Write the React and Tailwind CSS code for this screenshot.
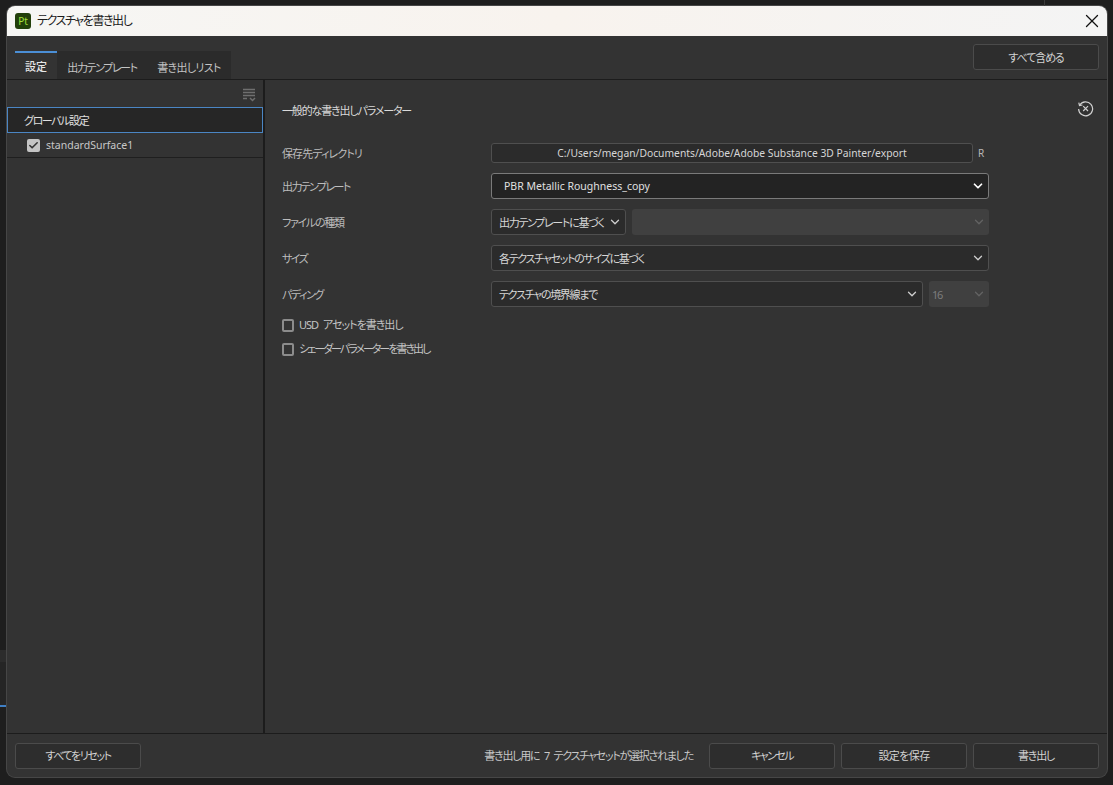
import { Check, ChevronDown, X } from "lucide-react";

const font = "font-['Noto_Sans','Noto_Sans_CJK_JP',sans-serif] [font-feature-settings:'palt']";

function FooterButton({ children, className = "tracking-[-1.2px]" }) {
  return (
    <button className={`h-[26px] w-[126px] rounded-[3px] border border-[#4b4b4b] bg-[#2d2d2d] pt-[1px] text-[11px] text-[#d2d2d2] ${className}`}>
      {children}
    </button>
  );
}

function Select({ value, className = "", dark, disabled }) {
  return (
    <div
      className={`flex h-[26px] items-center justify-between rounded-[3px] pl-[7px] pr-[3px] text-[11px] ${
        disabled
          ? "bg-[#404040] text-[#7d7d7d]"
          : dark
            ? "border border-[#7a7a7a] bg-[#232323] text-[#e0e0e0]"
            : "border border-[#4f4f4f] bg-[#2b2b2b] text-[#d6d6d6]"
      } ${className}`}
    >
      <span className={`whitespace-nowrap pt-[2px] ${dark ? "pl-[5px] text-[10.5px]" : "tracking-[-1.3px]"}`}>{value}</span>
      <ChevronDown
        size={14}
        strokeWidth={dark ? 3 : 2.2}
        className={disabled ? "text-[#636363]" : dark ? "text-white" : "text-[#cfcfcf]"}
      />
    </div>
  );
}

function Row({ label, className = "", tracking = "tracking-[-1.4px]", children }) {
  return (
    <div className={`flex items-center ${className}`}>
      <div className={`w-[209px] pt-[3px] text-[11px] text-[#bdbdbd] ${tracking}`}>{label}</div>
      {children}
    </div>
  );
}

function CheckRow({ label, tracking }) {
  return (
    <div className="flex h-[12px] items-center gap-[5px] text-[11px] text-[#c4c4c4]">
      <div className="h-[13px] w-[12px] rounded-[2px] border-2 border-[#8c8c8c]" />
      <span className={tracking}>{label}</span>
    </div>
  );
}

function ListIcon() {
  return (
    <svg width="14" height="14" viewBox="0 0 14 14" fill="none" stroke="#6f6f6f" strokeWidth="1.5">
      <path d="M1 1.5h12M1 4.5h12M1 7.5h12M1 10.5h4" />
      <path d="M8 10l2.5 2.5L13 10" />
    </svg>
  );
}

function ResetIcon() {
  return (
    <svg width="17" height="17" viewBox="0 0 17 17" fill="none" stroke="#d0d0d0" strokeWidth="1.2">
      <path d="M2.6 5.2A7 7 0 1 1 1.6 9" />
      <path d="M1.8 2.6l.7 3 3-.6" />
      <path d="M6.2 6.2l4.8 4.8M11 6.2l-4.8 4.8" />
    </svg>
  );
}

export default function App() {
  return (
    <div className={`relative h-[785px] w-[1113px] overflow-hidden bg-[#1e1e1e] pl-[7px] pt-[6px] ${font}`}>
      {/* bits of the app window behind the dialog */}
      <div className="absolute left-0 top-[650px] h-[12px] w-[6px] bg-[#2c2c2c]" />
      <div className="absolute left-0 top-[662px] h-[44px] w-[6px] bg-[#252525]" />
      <div className="absolute left-0 top-[705px] h-[2px] w-[6px] bg-[#3f7fc4]" />
      <div className="absolute left-[1044px] top-0 h-[6px] w-[69px] border-l border-[#3a3a3a]" />

      <div className="flex h-[771px] w-[1100px] flex-col overflow-hidden rounded-[8px] bg-[#333333] ring-1 ring-[#464646]">
        {/* title bar */}
        <div className="flex h-[30px] shrink-0 items-center justify-between bg-gradient-to-r from-[#f6f6f4] via-[#f8f3ee] to-[#f4f4f4] pl-[8px] pr-[4px]">
          <div className="flex items-center gap-[6px]">
            <div className="flex h-[16px] w-[16px] items-center justify-center rounded-[3px] bg-[#223f0a] text-[10px] leading-none text-[#a4e03a]">
              Pt
            </div>
            <span className="text-[12px] tracking-[-1.4px] text-[#1c1c1c]">テクスチャを書き出し</span>
          </div>
          <X size={22} strokeWidth={1.4} className="text-[#111111]" />
        </div>

        {/* tabs */}
        <div className="flex h-[44px] shrink-0 items-end justify-between border-b border-[#1c1c1c] pl-[8px] pr-[8px]">
          <div className="flex h-[28px] w-[216px] bg-[#2b2b2b] text-[11px]">
            <div className="flex w-[42px] items-center justify-center border-t-2 border-[#4b8fd6] bg-[#333333] pt-[3px] font-medium text-[#e6e6e6]">
              設定
            </div>
            <div className="flex w-[90px] items-center justify-center pt-[6px] tracking-[-1.4px] text-[#c4c4c4]">出力テンプレート</div>
            <div className="flex w-[84px] items-center justify-center pt-[6px] tracking-[-0.7px] text-[#c4c4c4]">書き出しリスト</div>
          </div>
          <button className="mb-[9px] h-[26px] w-[126px] rounded-[3px] border border-[#4b4b4b] bg-[#2d2d2d] pt-[2px] text-[11px] tracking-[-1.1px] text-[#d2d2d2]">
            すべて含める
          </button>
        </div>

        {/* body */}
        <div className="flex min-h-0 flex-1">
          <div className="w-[258px] shrink-0 border-r-2 border-[#1c1c1c]">
            <div className="flex h-[27px] items-center justify-end pr-[7px] pt-[2px]">
              <ListIcon />
            </div>
            <div className="flex h-[26px] items-center border border-[#4b86c4] bg-[#262626] pl-[16px] pt-[3px] text-[11px] tracking-[-1.4px] text-[#e0e0e0]">
              グローバル設定
            </div>
            <div className="flex h-[25px] items-center gap-[6px] border-b border-[#1f1f1f] pl-[20px] text-[10.5px] text-[#c8c8c8]">
              <div className="flex h-[13px] w-[13px] items-center justify-center rounded-[2px] bg-[#c4c4c4]">
                <Check size={11} strokeWidth={3.5} className="text-[#333333]" />
              </div>
              <span className="pt-[2px]">standardSurface1</span>
            </div>
          </div>

          <div className="min-w-0 flex-1 pl-[17px] pr-[13px]">
            <div className="flex h-[27px] items-center justify-between pt-[1px]">
              <span className="mt-[35px] text-[11px] tracking-[-1.15px] text-[#dadada]">一般的な書き出しパラメーター</span>
              <span className="mt-[29px]">
                <ResetIcon />
              </span>
            </div>
            <div className="mt-[36px] flex flex-col">
              <Row label="保存先ディレクトリ" className="h-[20px]" tracking="tracking-[-0.9px]">
                <div className="flex h-[20px] w-[482px] items-center justify-center rounded-[3px] border border-[#4f4f4f] bg-[#2b2b2b] pt-[2px] text-[10.3px] text-[#d6d6d6]">
                  C:/Users/megan/Documents/Adobe/Adobe Substance 3D Painter/export
                </div>
                <span className="ml-[5px] pt-[1px] text-[10px] text-[#b8b8b8]">R</span>
              </Row>
              <Row label="出力テンプレート" className="mt-[10px]" tracking="tracking-[-1.6px]">
                <Select value="PBR Metallic Roughness_copy" dark className="w-[498px]" />
              </Row>
              <Row label="ファイルの種類" className="mt-[10px]" tracking="tracking-[-1.3px]">
                <Select value="出力テンプレートに基づく" className="w-[135px]" />
                <Select value="" disabled className="ml-[6px] w-[357px]" />
              </Row>
              <Row label="サイズ" className="mt-[10px]" tracking="tracking-[-1.6px]">
                <Select value="各テクスチャセットのサイズに基づく" className="w-[498px]" />
              </Row>
              <Row label="パディング" className="mt-[10px]">
                <Select value="テクスチャの境界線まで" className="w-[432px]" />
                <Select value="16" disabled className="ml-[6px] w-[60px] !pl-[3px]" />
              </Row>
              <div className="mt-[12px] flex flex-col gap-[12px]">
                <CheckRow label="USD アセットを書き出し" tracking="tracking-[-1px] [word-spacing:3px]" />
                <CheckRow label="シェーダーパラメーターを書き出し" tracking="tracking-[-2px]" />
              </div>
            </div>
          </div>
        </div>

        {/* footer */}
        <div className="flex h-[44px] shrink-0 items-center justify-between border-t border-[#1c1c1c] pl-[8px] pr-[8px]">
          <FooterButton className="tracking-[-1.4px]">すべてをリセット</FooterButton>
          <div className="flex items-center gap-[6px]">
            <span className="mr-[10px] pt-[1px] text-[11px] tracking-[-1.25px] text-[#c8c8c8] [word-spacing:3px]">書き出し用に 7 テクスチャセットが選択されました</span>
            <FooterButton className="tracking-[-1.6px]">キャンセル</FooterButton>
            <FooterButton className="tracking-[-0.6px]">設定を保存</FooterButton>
            <FooterButton>書き出し</FooterButton>
          </div>
        </div>
      </div>
    </div>
  );
}
